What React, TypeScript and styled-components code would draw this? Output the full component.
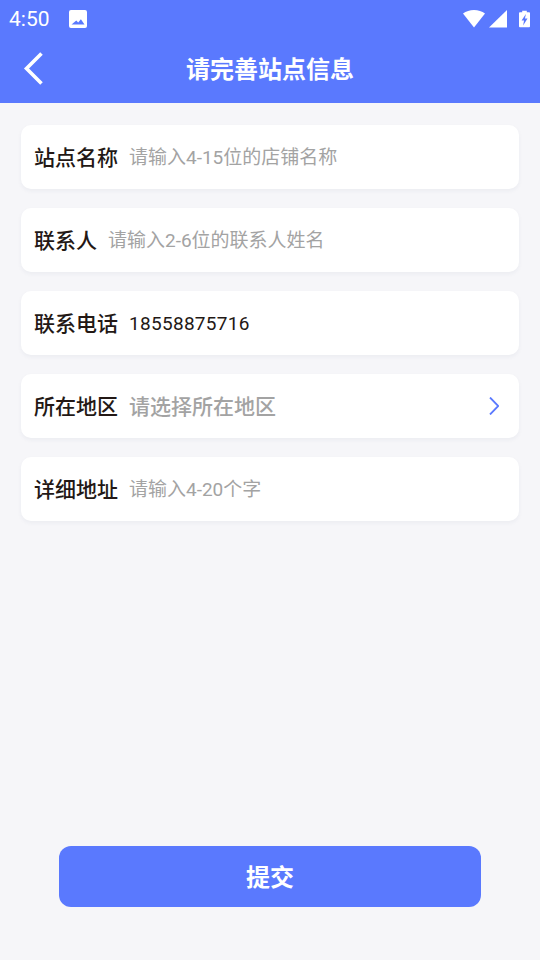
import styled, { createGlobalStyle } from "styled-components";

const GlobalStyle = createGlobalStyle`
  html, body {
    margin: 0;
    padding: 0;
    background: #f6f6f9;
    font-family: "Roboto", "Noto Sans CJK SC", sans-serif;
  }
`;

const Page = styled.div`
  width: 540px;
  height: 960px;
  display: flex;
  flex-direction: column;
  background: #f6f6f9;
  overflow: hidden;
`;

const Header = styled.header`
  height: 103px;
  background: #5a79fe;
  color: #fff;
  display: flex;
  flex-direction: column;
  flex-shrink: 0;
`;

const StatusBar = styled.div`
  height: 36px;
  padding: 1px 10px 0 9px;
  display: flex;
  align-items: center;
  justify-content: space-between;
`;

const StatusLeft = styled.div`
  display: flex;
  align-items: center;
  gap: 19px;
`;

const StatusRight = styled.div`
  display: flex;
  align-items: center;
  gap: 4px;
`;

const Clock = styled.span`
  font-size: 21px;
  font-weight: 400;
  line-height: 36px;
`;

const BatteryIcon = styled.svg`
  margin-left: 8px;
`;

const TitleBar = styled.div`
  flex: 1;
  position: relative;
  display: flex;
  align-items: center;
  justify-content: center;
`;

const BackButton = styled.button`
  position: absolute;
  left: 22px;
  top: 13px;
  width: 24px;
  height: 36px;
  padding: 0;
  border: 0;
  background: none;
  display: flex;
`;

const Title = styled.h1`
  margin: 0;
  font-size: 24px;
  font-weight: 700;
  line-height: 34px;
`;

const Form = styled.main`
  flex: 1;
  padding: 22px 21px 0;
  display: flex;
  flex-direction: column;
  gap: 19px;
`;

const Row = styled.div`
  height: 64px;
  box-sizing: border-box;
  background: #fff;
  border-radius: 10px;
  box-shadow: 0 2px 4px rgba(40, 50, 90, 0.05);
  padding: 0 20px 3px 13px;
  display: flex;
  align-items: center;
  gap: 11px;
`;

const Label = styled.span`
  font-size: 21px;
  font-weight: 500;
  color: #231815;
  white-space: nowrap;
`;

const Value = styled.span<{ $filled?: boolean; $large?: boolean }>`
  flex: 1;
  font-size: ${(p) => (p.$large ? "21px" : "19px")};
  font-weight: ${(p) => (p.$large ? 500 : 400)};
  color: ${(p) => (p.$filled ? "#231815" : "#a3a3a3")};
  letter-spacing: ${(p) => (p.$filled ? "0.3px" : "0")};
  padding-top: ${(p) => (p.$filled ? "3px" : "0")};
  white-space: nowrap;
`;

const ArrowIcon = styled.svg`
  margin-top: 3px;
`;

const Footer = styled.footer`
  padding: 0 59px 53px;
`;

const SubmitButton = styled.button`
  width: 100%;
  height: 61px;
  border: 0;
  border-radius: 12px;
  background: #5a79fe;
  color: #fff;
  font-family: inherit;
  font-size: 24px;
  font-weight: 700;
  padding: 0 0 3px;
`;

const rows = [
  { label: "站点名称", value: "请输入4-15位的店铺名称" },
  { label: "联系人", value: "请输入2-6位的联系人姓名" },
  { label: "联系电话", value: "18558875716", filled: true },
  { label: "所在地区", value: "请选择所在地区", large: true, arrow: true },
  { label: "详细地址", value: "请输入4-20个字" },
];

export default function App() {
  return (
    <Page>
      <GlobalStyle />
      <Header>
        <StatusBar>
          <StatusLeft>
            <Clock>4:50</Clock>
            <svg width="18" height="18" viewBox="0 0 18 18">
              <path
                fill="#fff"
                fillRule="evenodd"
                d="M2 0h14a2 2 0 0 1 2 2v14a2 2 0 0 1-2 2H2a2 2 0 0 1-2-2V2a2 2 0 0 1 2-2zM2.500 14.500h13l-3.600-5.200-2.700 3.200-1.900-2.100z"
              />
            </svg>
          </StatusLeft>
          <StatusRight>
            <svg width="22" height="18" viewBox="0 0 22 18">
              <path fill="#fff" d="M0 3.600C3 1.200 6.800 0 11 0s8 1.200 11 3.600L11 17.500z" />
            </svg>
            <svg width="18" height="18" viewBox="0 0 18 18">
              <path fill="#fff" d="M18 0v17.500H0z" />
            </svg>
            <BatteryIcon width="11" height="18" viewBox="0 0 12 18">
              <path
                fill="#fff"
                fillRule="evenodd"
                d="M3.500 0h5v1.500H11a1 1 0 0 1 1 1V17a1 1 0 0 1-1 1H1a1 1 0 0 1-1-1V2.500a1 1 0 0 1 1-1h2.500zM7.500 3.500 2.800 10.500h2.700L4.500 16l4.800-7.500H6.500z"
              />
            </BatteryIcon>
          </StatusRight>
        </StatusBar>
        <TitleBar>
          <BackButton aria-label="返回">
            <svg width="24" height="36" viewBox="0 0 24 36">
              <path d="M19.500 3.500 4.500 18.500 19.500 33.500" fill="none" stroke="#fff" strokeWidth="3.600" />
            </svg>
          </BackButton>
          <Title>请完善站点信息</Title>
        </TitleBar>
      </Header>
      <Form>
        {rows.map((row) => (
          <Row key={row.label}>
            <Label>{row.label}</Label>
            <Value $filled={row.filled} $large={row.large}>
              {row.value}
            </Value>
            {row.arrow && (
              <ArrowIcon width="10" height="18" viewBox="0 0 10 18">
                <path d="M1 .5 9.300 9 1 17.500" fill="none" stroke="#5a79fe" strokeWidth="1.800" />
              </ArrowIcon>
            )}
          </Row>
        ))}
      </Form>
      <Footer>
        <SubmitButton>提交</SubmitButton>
      </Footer>
    </Page>
  );
}
